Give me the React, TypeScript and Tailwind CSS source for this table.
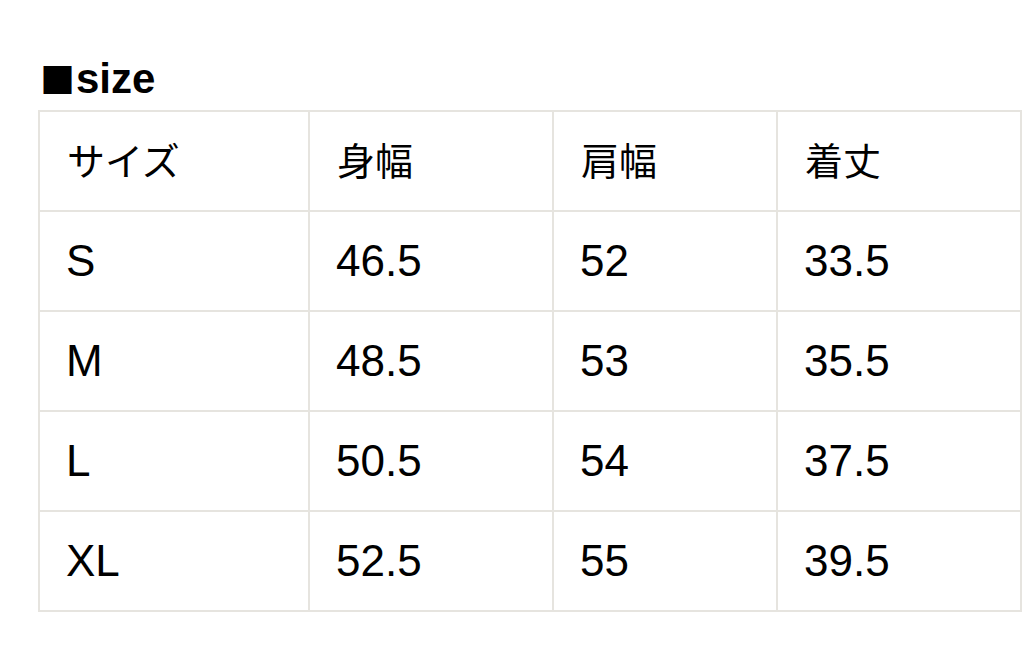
import React from "react";

const headers = ["サイズ", "身幅", "肩幅", "着丈"];
const rows = [
  ["S", "46.5", "52", "33.5"],
  ["M", "48.5", "53", "35.5"],
  ["L", "50.5", "54", "37.5"],
  ["XL", "52.5", "55", "39.5"],
];

export default function App() {
  return (
    <div
      className="w-[1024px] h-[657px] bg-white pl-[38px] pt-[54px] text-black"
      style={{ fontFamily: '"Liberation Sans", "Noto Sans CJK JP", sans-serif' }}
    >
      <div className="h-[48px] leading-[48px] mb-[8px] flex items-baseline">
        <span className="text-[35px] ml-[2px] mr-[1px] font-['Noto_Sans_CJK_JP',sans-serif]">■</span>
        <span className="text-[42px] font-bold">size</span>
      </div>
      <div className="grid w-[984px] grid-cols-[268px_242px_222px_242px] auto-rows-[98px] gap-[2px] bg-[#e6e4df] p-[2px]">
        {headers.map((h) => (
          <div
            key={h}
            className="bg-white flex items-center pl-[27px] pb-[6px] text-[38px] font-['Noto_Sans_CJK_JP',sans-serif]"
          >
            {h}
          </div>
        ))}
        {rows.map((r) =>
          r.map((c, i) => (
            <div
              key={r[0] + i}
              className="bg-white flex items-center pl-[26px] text-[44px]"
            >
              {c}
            </div>
          ))
        )}
      </div>
    </div>
  );
}
